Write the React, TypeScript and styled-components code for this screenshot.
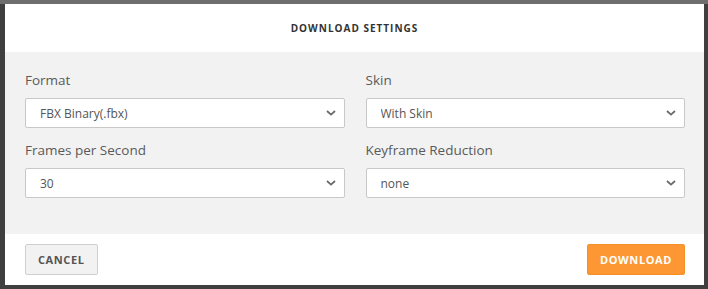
import styled, { createGlobalStyle } from "styled-components";

const GlobalStyle = createGlobalStyle`
  html, body {
    margin: 0;
    padding: 0;
  }
  body {
    background: #3b3b3b;
    font-family: "Open Sans", "Liberation Sans", sans-serif;
  }
`;

const fields = [
  { key: "format", label: "Format", options: ["FBX Binary(.fbx)", "FBX ASCII(.fbx)", "Collada(.dae)"] },
  { key: "skin", label: "Skin", options: ["With Skin", "Without Skin"] },
  { key: "fps", label: "Frames per Second", options: ["30", "24", "60"] },
  { key: "reduction", label: "Keyframe Reduction", options: ["none", "uniform"] },
];

function Chevron() {
  return (
    <ChevronIcon width="10" height="6" viewBox="0 0 10 6">
      <path d="M1 1l4 3.6L9 1" fill="none" stroke="#6a6a6a" strokeWidth="1.8" />
    </ChevronIcon>
  );
}

export default function App() {
  return (
    <>
      <GlobalStyle />
      <Backdrop>
        <Modal>
          <Header>Download Settings</Header>
          <Body>
            {fields.map((f) => (
              <Field key={f.key}>
                <Label htmlFor={f.key}>{f.label}</Label>
                <SelectWrap>
                  <Select id={f.key} defaultValue={f.options[0]}>
                    {f.options.map((o) => (
                      <option key={o}>{o}</option>
                    ))}
                  </Select>
                  <Chevron />
                </SelectWrap>
              </Field>
            ))}
          </Body>
          <Footer>
            <Button type="button">Cancel</Button>
            <Button type="button" $primary>
              Download
            </Button>
          </Footer>
        </Modal>
      </Backdrop>
    </>
  );
}

const Backdrop = styled.div`
  width: 708px;
  height: 289px;
  box-sizing: border-box;
  padding: 4px 4px 0 5px;
  background: linear-gradient(#6e6e6e 0 4px, #3f3f3f 4px 100%);
`;

const Modal = styled.div`
  width: 699px;
  height: 281px;
  background: #fff;
  display: flex;
  flex-direction: column;
`;

const Header = styled.h2`
  margin: 0;
  height: 48px;
  display: flex;
  align-items: center;
  justify-content: center;
  font-size: 10px;
  font-weight: 700;
  letter-spacing: 1px;
  text-transform: uppercase;
  color: #333;
`;

const Body = styled.div`
  background: #f2f2f2;
  height: 182px;
  box-sizing: border-box;
  padding: 18px 19px 0 20px;
  display: grid;
  grid-template-columns: 1fr 1fr;
  column-gap: 21px;
  row-gap: 12px;
  align-content: start;
`;

const Field = styled.div`
  display: flex;
  flex-direction: column;
`;

const Label = styled.label`
  font-size: 13.5px;
  line-height: 20px;
  color: #5a5a5a;
  margin-bottom: 8px;
`;

const SelectWrap = styled.div`
  position: relative;
`;

const Select = styled.select`
  appearance: none;
  width: 100%;
  height: 30px;
  box-sizing: border-box;
  border: 1px solid #c8c8c8;
  border-radius: 2px;
  background: #fff;
  padding: 0 30px 0 14px;
  font-family: "Open Sans", "Liberation Sans", sans-serif;
  font-size: 12px;
  color: #555;
  outline: none;
`;

const ChevronIcon = styled.svg`
  position: absolute;
  right: 9px;
  top: 12px;
  pointer-events: none;
`;

const Footer = styled.div`
  flex: 1;
  display: flex;
  align-items: center;
  justify-content: space-between;
  padding: 0 19px 0 20px;
`;

const Button = styled.button<{ $primary?: boolean }>`
  height: 31px;
  box-sizing: border-box;
  padding: 0 12px;
  border: 1px solid ${({ $primary }) => ($primary ? "#f59027" : "#cfcfcf")};
  border-radius: 2px;
  background: ${({ $primary }) => ($primary ? "#fd9733" : "#f2f2f2")};
  color: ${({ $primary }) => ($primary ? "#fff" : "#555")};
  font-family: "Open Sans", "Liberation Sans", sans-serif;
  font-size: 11px;
  font-weight: 700;
  letter-spacing: 0.6px;
  text-transform: uppercase;
  cursor: pointer;
`;
